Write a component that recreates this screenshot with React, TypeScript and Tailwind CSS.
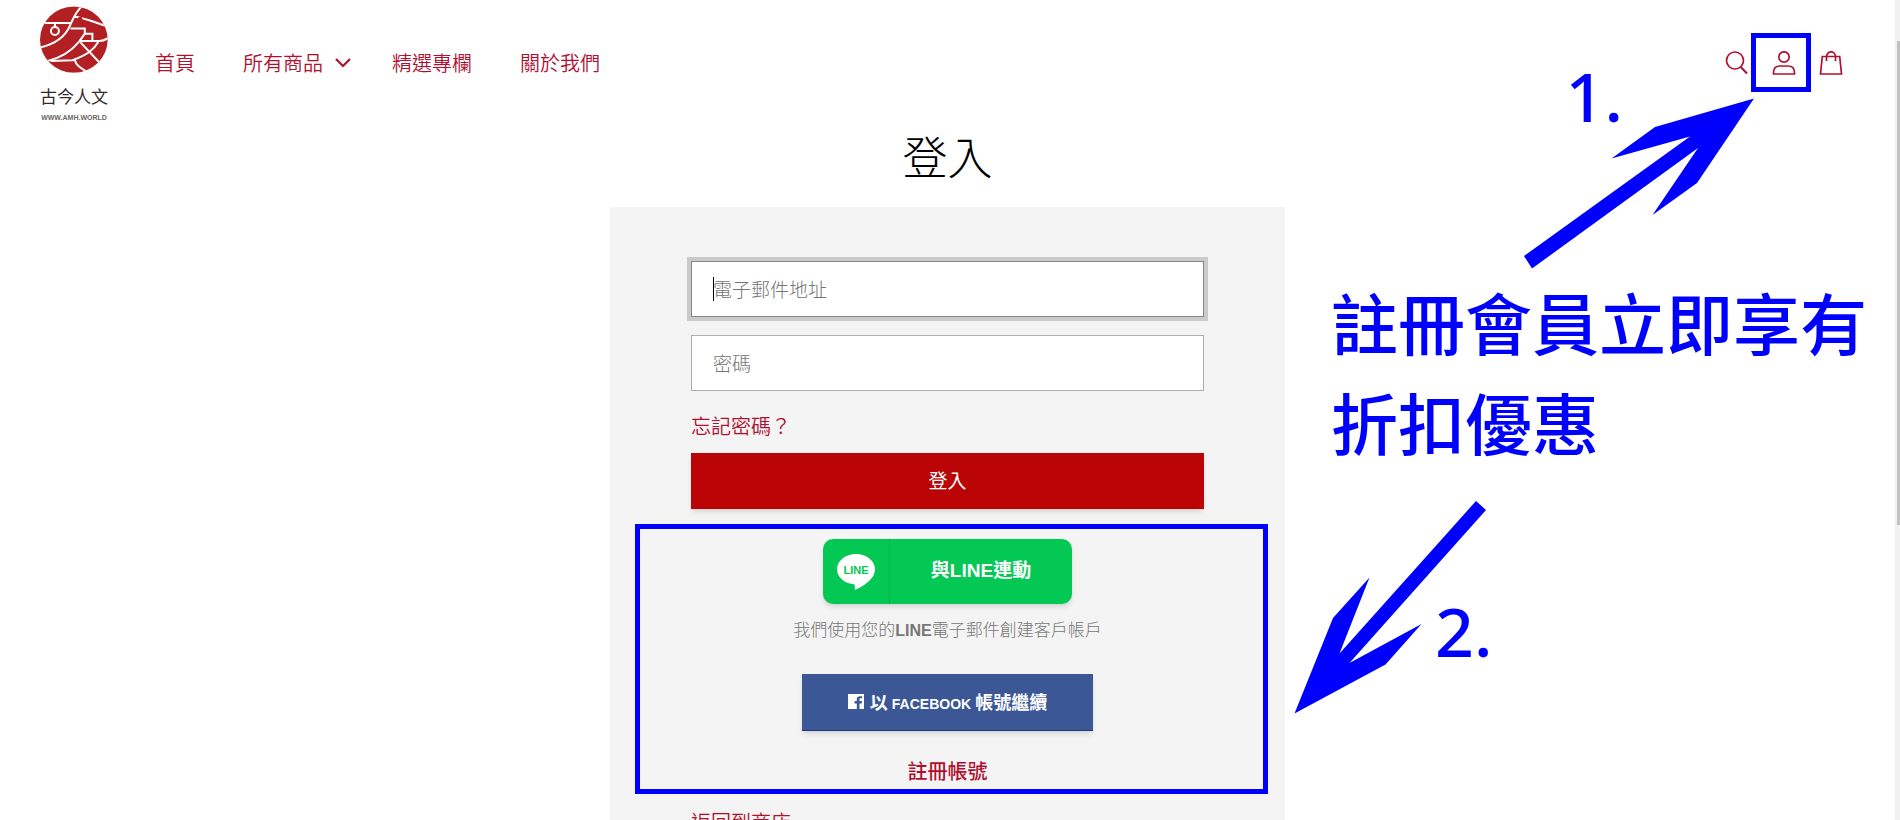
import React from 'react';

const navItems = [
  { label: '首頁', hasMenu: false },
  { label: '所有商品', hasMenu: true },
  { label: '精選專欄', hasMenu: false },
  { label: '關於我們', hasMenu: false },
];

function Logo() {
  return (
    <a href="#" className="flex w-[68px] flex-col items-center">
      <svg viewBox="60 17 205 201" className="h-[67px] w-[68px]" aria-hidden="true">
        <clipPath id="seal">
          <ellipse cx="162" cy="118" rx="102" ry="100" />
        </clipPath>
        <g clipPath="url(#seal)">
          <rect x="60" y="17" width="205" height="201" fill="#b22024" />
          <g fill="none" stroke="#fff" strokeWidth="6">
            <path d="M60 68H156" />
            <path d="M190 14C172 28 162 48 152 72C138 108 105 132 58 142" />
            <path d="M105 68V80" />
            <circle cx="105" cy="92" r="12" />
            <path d="M162 48C195 52 225 66 268 80" />
            <path d="M152 84H195V100L178 124C155 152 125 172 84 182" />
            <path d="M195 100H218V122" />
            <path d="M178 122H240C250 122 258 118 268 112" />
            <path d="M182 126L242 190" />
            <path d="M236 124C222 148 205 162 158 180L92 182" />
            <path d="M164 178C168 195 180 205 206 216" />
          </g>
          <circle cx="181" cy="56" r="7" fill="#b22024" />
        </g>
      </svg>
      <span className="mt-[9px] text-[17px] leading-7 text-[#332c2b]">古今人文</span>
      <span className="mt-1 font-['Liberation_Sans'] text-[7px] leading-[8px] font-bold text-[#6b6666]">WWW.AMH.WORLD</span>
    </a>
  );
}

function Header() {
  return (
    <header className="flex items-center justify-between pt-[6px] pr-[52px] pl-10 text-[#b0102f]">
      <div className="flex items-center gap-[47px]">
        <Logo />
        <nav className="flex items-center gap-12 pb-[2px] text-[20px] leading-7 font-[350]">
          {navItems.map((item) => (
            <a key={item.label} href="#" className={item.hasMenu ? '-mr-[7px] flex items-center gap-3' : 'flex'}>
              {item.label}
              {item.hasMenu && (
                <svg viewBox="0 0 16 10" className="h-[10px] w-4" fill="none" stroke="currentColor" strokeWidth="2.2">
                  <path d="M1 1l7 7 7-7" />
                </svg>
              )}
            </a>
          ))}
        </nav>
      </div>
      <div className="flex items-center gap-[23px] pb-[2px]">
        <button type="button" aria-label="搜尋">
          <svg viewBox="0 0 24 24" className="size-6" fill="none" stroke="currentColor" strokeWidth="1.7">
            <circle cx="10" cy="9.5" r="8.5" />
            <path d="M15.8 16l6.2 6.5" strokeWidth="2" />
          </svg>
        </button>
        <button type="button" aria-label="帳號" className="relative">
          <svg viewBox="0 0 24 24" className="size-6" fill="none" stroke="currentColor" strokeWidth="1.7">
            <circle cx="12" cy="6" r="5.2" />
            <path d="M1.5 23v-1.500c0-4 2.500-6.500 6.500-6.500h8c4 0 6.500 2.500 6.500 6.500v1.500z" />
          </svg>
          <span className="absolute -top-[18px] -right-[15px] h-[59px] w-[60px] border-[5px] border-[#0000ff]" />
        </button>
        <button type="button" aria-label="購物車">
          <svg viewBox="0 0 24 24" className="size-6" fill="none" stroke="currentColor" strokeWidth="1.7">
            <path d="M3.300 5.500h17.400l1.800 17.500h-21z" />
            <path d="M7.500 10V6a4.500 5.200 0 0 1 9 0v4" />
          </svg>
        </button>
      </div>
    </header>
  );
}

function LineLogo() {
  return (
    <svg viewBox="0 0 38 36" className="h-9 w-[38px]" aria-hidden="true">
      <path
        d="M19 0C8.500 0 0 6.800 0 15.200c0 7.500 6.800 13.800 16 14.900 2 .4 2 1.500 1.700 4.900 0 .6.500.9 1.200.6C24 33 38 26 38 15.200 38 6.800 29.500 0 19 0z"
        fill="#fff"
      />
      <text x="19" y="19.500" textAnchor="middle" fontFamily="Liberation Sans" fontSize="11" fontWeight="700" fill="#06c755">
        LINE
      </text>
    </svg>
  );
}

function SocialLogin() {
  return (
    <section className="relative mt-[15px] flex flex-col items-center pt-[15px] pb-[11px]">
      <button
        type="button"
        className="flex h-[65px] w-[249px] items-center rounded-[10px] bg-[#04c854] text-[19px] font-bold text-white shadow-md"
      >
        <span className="flex h-full w-[67px] items-center justify-center border-r border-[#05b34c]">
          <LineLogo />
        </span>
        <span className="flex-1 font-['Liberation_Sans','Noto_Sans_CJK_TC',sans-serif]">與LINE連動</span>
      </button>
      <p className="mt-[13px] text-[17px] leading-6 font-light text-[#777]">
        我們使用您的<span className="font-['Liberation_Sans'] text-[16px] font-bold">LINE</span>電子郵件創建客戶帳戶
      </p>
      <button
        type="button"
        className="mt-[31px] flex h-[57px] w-[291px] items-center justify-center gap-[6px] border-b border-[#1d3c80] bg-[#3b5796] pb-[2px] text-[18px] font-bold text-white shadow-md"
      >
        <svg viewBox="0 0 16 15" className="h-[15px] w-4" aria-hidden="true">
          <path d="M0 0h16v15h-4.500V9.500h2.200l.3-2.500h-2.500V5.500c0-.8.400-1.200 1.200-1.200H14V2.200h-2C9.900 2.200 8.800 3.400 8.800 5.300V7H6.600v2.500h2.200V15H0z" fill="#fff" />
        </svg>
        <span>
          以 <span className="font-['Liberation_Sans'] text-[14px]">FACEBOOK</span> 帳號繼續
        </span>
      </button>
      <a href="#" className="mt-7 text-[20px] leading-6 font-medium text-[#b0102f]">
        註冊帳號
      </a>
      <div className="pointer-events-none absolute inset-y-0 -right-16 -left-14 border-[5px] border-[#0000ff]" />
    </section>
  );
}

function LoginForm() {
  return (
    <form className="flex flex-col">
      <div className="relative">
        <input
          type="email"
          aria-label="電子郵件地址"
          placeholder="電子郵件地址"
          className="block h-14 w-full border border-[#858585] bg-white px-[21px] pb-[2px] text-[19px] font-light text-black ring-4 ring-[#cacaca] outline-none placeholder:text-[#757575]"
        />
        <span className="absolute top-4 left-[22px] h-6 w-px bg-black" />
      </div>
      <input
        type="password"
        aria-label="密碼"
        placeholder="密碼"
        className="mt-[18px] h-14 border border-[#aeaeae] bg-white px-[21px] pb-[2px] text-[19px] font-light text-black outline-none placeholder:text-[#757575]"
      />
      <a href="#" className="mt-[21px] self-start text-[20px] leading-7 font-[350] text-[#b0102f]">
        忘記密碼？
      </a>
      <button type="submit" className="mt-[13px] h-14 bg-[#ba0405] pb-[2px] text-[19px] text-white shadow-md">
        登入
      </button>
    </form>
  );
}

export default function App() {
  return (
    <div className="flex h-screen overflow-hidden bg-white font-['Noto_Sans_CJK_TC',sans-serif]">
      <div className="relative min-w-0 flex-1">
        <Header />
        <main className="flex flex-col items-center">
          <h1 className="mt-2 text-[45px] leading-[52px] font-light text-black">登入</h1>
          <div className="relative mt-[25px] w-[675px] bg-[#f4f4f4] px-[81px] pt-[54px] pb-16">
            <LoginForm />
            <SocialLogin />
            <a href="#" className="mt-4 block text-[20px] leading-6 font-[350] text-[#b0102f]">
              返回到商店
            </a>
            <svg viewBox="1294 500 193 214" className="absolute top-[293px] left-[684px] h-[214px] w-[193px]" fill="#0000ff">
              <path d="M1294.500 713.500L1333 618l36.500-40.500-30 76L1476 501l10 9-136.500 153 72-39-36 40.500z" />
            </svg>
            <span className="absolute top-[376px] left-[825px] font-['Noto_Sans'] text-[68px] leading-[96px] font-medium text-[#0000ff]">2.</span>
          </div>
        </main>

        <span className="absolute top-12 right-[272px] font-['Noto_Sans'] text-[68px] leading-[96px] font-medium text-[#0000ff]">1.</span>
        <svg viewBox="1523 98 232 171" className="absolute top-[98px] right-[140px] h-[171px] w-[232px]" fill="#0000ff">
          <path d="M1754 98.500L1655 127l-43.500 31.500 78.500-22L1524 256l8 12.500L1698 148l-45.500 67 44.500-32z" />
        </svg>
        <p className="absolute top-[271px] right-6 w-[540px] text-[67px] leading-[100px] font-medium text-[#0000ff]">
          註冊會員立即享有折扣優惠
        </p>
      </div>

      <div className="w-[5px] shrink-0 bg-[#f1f1f1] pt-[41px] pl-[2px]">
        <div className="h-[484px] bg-[#c1c1c1]" />
      </div>
    </div>
  );
}
